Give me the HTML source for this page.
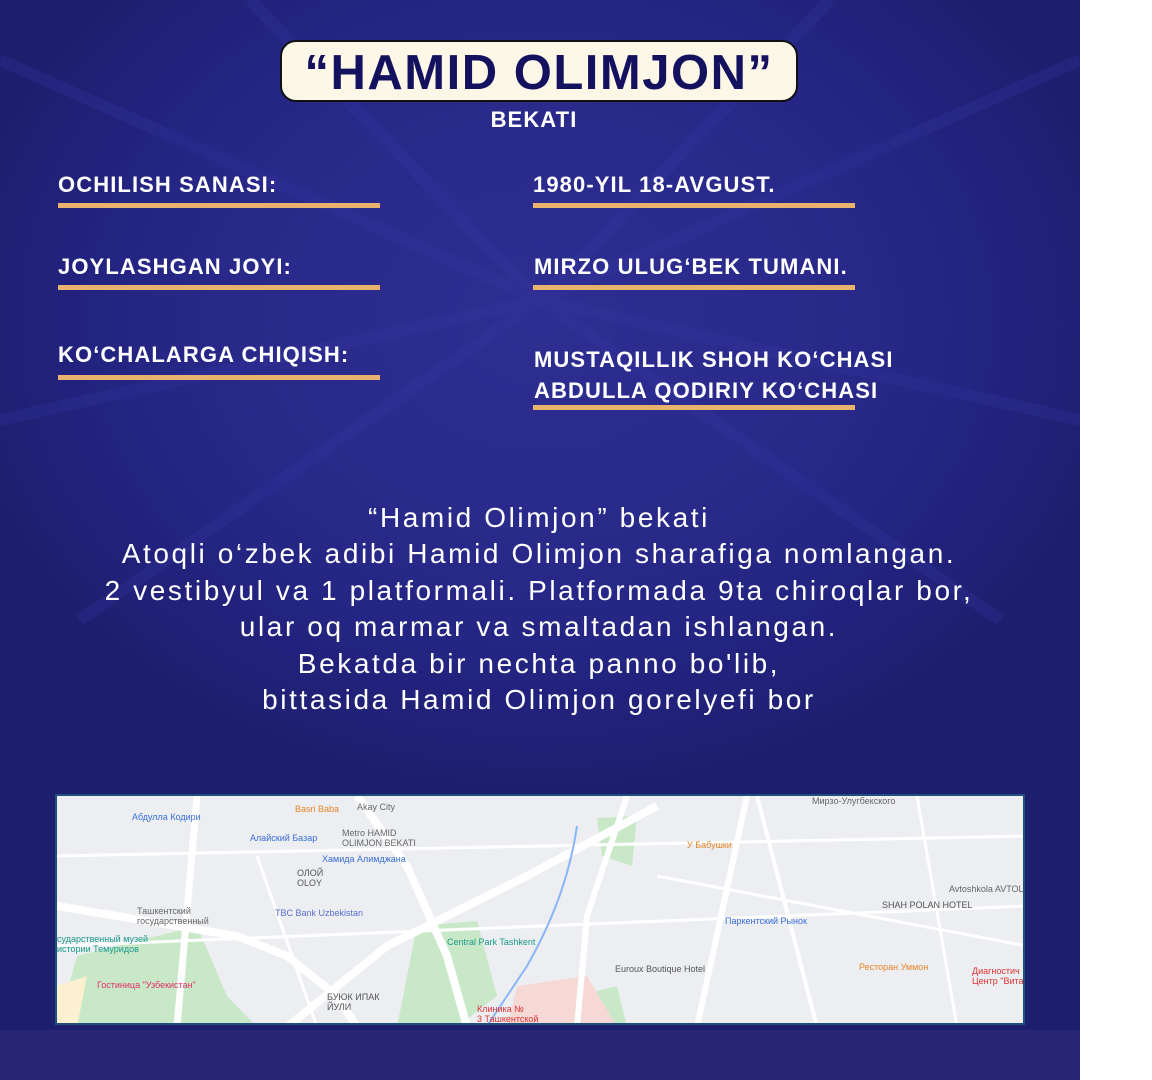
<!DOCTYPE html>
<html><head><meta charset="utf-8"><style>
*{margin:0;padding:0;box-sizing:border-box}
body{width:1152px;height:1080px;background:#fff;position:relative;overflow:hidden;font-family:"Liberation Sans",Arial,sans-serif}
#bg{position:absolute;left:0;top:0;width:1080px;height:1080px;background:radial-gradient(ellipse 600px 480px at 540px 320px,#2e2e92 0%,#29298a 50%,#232380 75%,#1e1e6e 100%)}
.pill{position:absolute;left:280px;top:40px;width:518px;height:62px;background:#fdf7e8;border:2px solid #111;border-radius:16px;text-align:center;font-weight:bold;font-size:49px;color:#14125e;line-height:62px;letter-spacing:1.5px}
.t{position:absolute;color:#fff;font-weight:bold;font-size:22px;white-space:nowrap;letter-spacing:1.1px}
.bar{position:absolute;height:5px;background:#e9b26e;width:322px}
#p{position:absolute;left:0;width:1078px;top:500px;text-align:center;color:#fff;font-size:28px;line-height:36.4px;letter-spacing:2.6px}
#map{position:absolute;left:55px;top:794px;width:970px;height:231px;border:2px solid #1d4f7a;background:#eceef1;overflow:hidden}
#map span{position:absolute;font-size:9px;white-space:nowrap}
</style></head><body>
<div id="bg"></div>
<svg style="position:absolute;left:0;top:0" width="1080" height="1080">
<g stroke="#3434a0" stroke-width="12" opacity="0.3" fill="none">
<line x1="540" y1="300" x2="0" y2="60"/><line x1="540" y1="300" x2="1080" y2="60"/>
<line x1="540" y1="300" x2="0" y2="420"/><line x1="540" y1="300" x2="1080" y2="420"/>
<line x1="540" y1="300" x2="250" y2="0"/><line x1="540" y1="300" x2="830" y2="0"/>
<line x1="540" y1="300" x2="80" y2="620"/><line x1="540" y1="300" x2="1000" y2="620"/>
</g>
<g fill="#2e2a78" opacity="0.6"><rect x="0" y="1030" width="1080" height="50"/></g>
</svg>
<div class="pill">“HAMID OLIMJON”</div>
<div class="t" style="left:0;width:1068px;text-align:center;top:107px">BEKATI</div>
<div class="t" style="left:58px;top:172px">OCHILISH SANASI:</div>
<div class="bar" style="left:58px;top:203px"></div>
<div class="t" style="left:533px;top:172px">1980-YIL 18-AVGUST.</div>
<div class="bar" style="left:533px;top:203px"></div>
<div class="t" style="left:58px;top:254px">JOYLASHGAN JOYI:</div>
<div class="bar" style="left:58px;top:285px"></div>
<div class="t" style="left:534px;top:254px">MIRZO ULUG‘BEK TUMANI.</div>
<div class="bar" style="left:533px;top:285px"></div>
<div class="t" style="left:58px;top:342px">KO‘CHALARGA CHIQISH:</div>
<div class="bar" style="left:58px;top:375px"></div>
<div class="t" style="left:534px;top:344px;line-height:31px">MUSTAQILLIK SHOH KO‘CHASI<br>ABDULLA QODIRIY KO‘CHASI</div>
<div class="bar" style="left:533px;top:405px"></div>
<div id="p">“Hamid Olimjon” bekati<br>Atoqli o‘zbek adibi Hamid Olimjon sharafiga nomlangan.<br>2 vestibyul va 1 platformali. Platformada 9ta chiroqlar bor,<br>ular oq marmar va smaltadan ishlangan.<br>Bekatda bir nechta panno bo'lib,<br>bittasida Hamid Olimjon gorelyefi bor</div>
<div id="map">
<svg width="970" height="231" style="position:absolute;left:0;top:0">
<g fill="#c9e8c8"><path d="M20 160 L140 130 L170 200 L200 231 L0 231 Z"/><path d="M360 130 L420 125 L440 200 L400 231 L340 231 Z"/><path d="M520 200 L560 190 L570 231 L510 231Z"/><path d="M540 22 L580 20 L575 70 L545 60Z"/></g>
<path d="M460 190 L530 180 L560 231 L450 231Z" fill="#f6d8d5"/>
<path d="M0 190 L30 180 L20 231 L0 231Z" fill="#fbf0d0"/>
<g stroke="#fff" fill="none">
<path d="M0 110 L180 140 L230 160 L280 200 L300 231" stroke-width="8"/>
<path d="M230 231 L330 150 L470 80 L600 10" stroke-width="8"/>
<path d="M300 0 L350 70 L390 160 L410 231" stroke-width="8"/>
<path d="M140 0 L120 231" stroke-width="7"/>
<path d="M570 0 L530 120 L520 231" stroke-width="6"/>
<path d="M690 0 L640 231" stroke-width="6"/>
<path d="M0 60 L970 40" stroke-width="3"/><path d="M0 150 L970 110" stroke-width="3"/><path d="M600 80 L970 150" stroke-width="3"/><path d="M700 0 L760 231" stroke-width="4"/><path d="M860 0 L900 231" stroke-width="3"/><path d="M200 60 L260 231" stroke-width="3"/>
</g>
<path d="M520 30 Q510 100 470 170 L430 230" stroke="#8ab4f8" stroke-width="2" fill="none"/>
</svg>
<span style="left:75px;top:16px;color:#3a6fd8">Абдулла Кодири</span>
<span style="left:193px;top:37px;color:#3a6fd8">Алайский Базар</span>
<span style="left:238px;top:8px;color:#e8862a">Basri Baba</span>
<span style="left:300px;top:6px;color:#666">Akay City</span>
<span style="left:285px;top:32px;color:#666">Metro HAMID<br>OLIMJON BEKATI</span>
<span style="left:265px;top:58px;color:#3a6fd8">Хамида Алимджана</span>
<span style="left:240px;top:72px;color:#555">ОЛОЙ<br>OLOY</span>
<span style="left:80px;top:110px;color:#666">Ташкентский<br>государственный</span>
<span style="left:0px;top:138px;color:#1a9a8a">сударственный музей<br>истории Темуридов</span>
<span style="left:218px;top:112px;color:#5a6fd0">TBC Bank Uzbekistan</span>
<span style="left:40px;top:184px;color:#e0306a">Гостиница "Узбекистан"</span>
<span style="left:390px;top:141px;color:#1a9a8a">Central Park Tashkent</span>
<span style="left:270px;top:196px;color:#555">БУЮК ИПАК<br>ЙУЛИ</span>
<span style="left:420px;top:208px;color:#d33">Клиника №<br>3 Ташкентской</span>
<span style="left:558px;top:168px;color:#555">Euroux Boutique Hotel</span>
<span style="left:668px;top:120px;color:#3a6fd8">Паркентский Рынок</span>
<span style="left:630px;top:44px;color:#e8862a">У Бабушки</span>
<span style="left:825px;top:104px;color:#555">SHAH POLAN HOTEL</span>
<span style="left:892px;top:88px;color:#666">Avtoshkola AVTOLIDER</span>
<span style="left:802px;top:166px;color:#e8862a">Ресторан Уммон</span>
<span style="left:915px;top:170px;color:#d33">Диагностич<br>Центр "Вита</span>
<span style="left:755px;top:0px;color:#666">Мирзо-Улугбекского</span>
</div>
</body></html>
